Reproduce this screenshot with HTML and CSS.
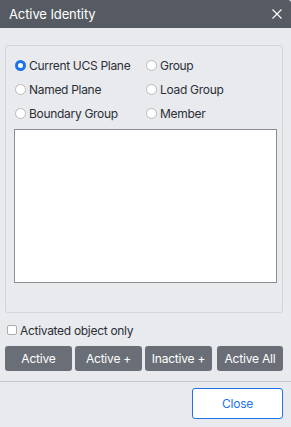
FILE: index.html
```html
<!DOCTYPE html>
<html lang="en">
<head>
<meta charset="utf-8">
<title>Active Identity</title>
<link rel="stylesheet" href="styles.css">
</head>
<body>
<div class="dialog">
  <div class="titlebar">
    <span class="title">Active Identity</span>
    <svg class="close-x" width="10" height="10" viewBox="0 0 10 10"><path d="M0.5 0.5 L9.5 9.5 M9.5 0.5 L0.5 9.5" stroke="#ffffff" stroke-width="1.1" fill="none"/></svg>
  </div>
  <div class="main">
    <div class="group">
      <div class="radios">
        <label class="opt"><input type="radio" name="t" checked><span>Current UCS Plane</span></label>
        <label class="opt"><input type="radio" name="t"><span>Group</span></label>
        <label class="opt"><input type="radio" name="t"><span>Named Plane</span></label>
        <label class="opt"><input type="radio" name="t"><span>Load Group</span></label>
        <label class="opt"><input type="radio" name="t"><span>Boundary Group</span></label>
        <label class="opt"><input type="radio" name="t"><span>Member</span></label>
      </div>
      <div class="listbox"></div>
    </div>
    <label class="check"><input type="checkbox"><span>Activated object only</span></label>
    <div class="actions">
      <button class="btn">Active</button>
      <button class="btn">Active +</button>
      <button class="btn">Inactive +</button>
      <button class="btn last">Active All</button>
    </div>
  </div>
  <div class="footer">
    <button class="close-btn">Close</button>
  </div>
</div>
</body>
</html>
```
FILE: styles.css
```css
html, body {
  margin: 0;
  padding: 0;
  background: #e9eaee;
}
body {
  font-family: Inter, "Noto Sans", sans-serif;
  font-size: 12px;
  letter-spacing: -0.3px;
  color: #2b2f36;
}
.dialog {
  width: 291px;
  height: 427px;
  background: #e9eaee;
  box-sizing: border-box;
  border-top-right-radius: 3px;
  overflow: hidden;
}
.titlebar {
  height: 28px;
  background: #565b63;
  display: flex;
  align-items: center;
  justify-content: space-between;
  padding: 0 9px 0 9px;
}
.title {
  color: #ffffff;
  font-size: 13px;
  letter-spacing: -0.1px;
  margin-top: -1px;
}
.close-x {
  display: block;
  margin-top: -1px;
}
.main {
  padding: 17px 8px 0 5px;
}
.group {
  height: 268px;
  box-sizing: border-box;
  border: 1px solid #d3d5d9;
  border-radius: 3px;
  padding: 7px 0 0 0;
}
.radios {
  display: grid;
  grid-template-columns: 131px 1fr;
  grid-auto-rows: 24px;
  padding-left: 9px;
}
.opt {
  display: flex;
  align-items: center;
  gap: 3px;
  white-space: nowrap;
}
.opt input {
  appearance: none;
  -webkit-appearance: none;
  margin: 0;
  width: 11px;
  height: 11px;
  box-sizing: border-box;
  border: 1px solid #b6b9be;
  border-radius: 50%;
  background: #ffffff;
}
.opt input:checked {
  border: 3.5px solid #1a73e8;
}
.listbox {
  margin: 4px 0 0 8px;
  width: 263px;
  height: 154px;
  box-sizing: border-box;
  background: #ffffff;
  border: 1px solid #8a8d92;
}
.check {
  display: flex;
  align-items: center;
  gap: 3px;
  height: 18px;
  margin-top: 8px;
  margin-left: 2px;
}
.check input {
  appearance: none;
  -webkit-appearance: none;
  margin: 0;
  width: 10px;
  height: 10px;
  box-sizing: border-box;
  border: 1px solid #a9acb1;
  border-radius: 2px;
  background: #ffffff;
}
.actions {
  display: grid;
  grid-template-columns: 67px 67px 67px 68px;
  column-gap: 3px;
  margin-top: 7px;
}
.btn {
  height: 25px;
  border: none;
  border-radius: 3px;
  background: #6a6f77;
  color: #ffffff;
  font-family: Inter, "Noto Sans", sans-serif;
  font-size: 12px;
  letter-spacing: -0.2px;
  padding: 0;
}
.btn.last {
  margin-left: 2px;
}
.footer {
  margin-top: 10px;
  border-top: 1px solid #c6c8cc;
  padding: 6px 8px 0 0;
  display: flex;
  justify-content: flex-end;
}
.close-btn {
  width: 91px;
  height: 31px;
  box-sizing: border-box;
  background: #ffffff;
  border: 1px solid #1a73e8;
  border-radius: 3px;
  color: #1a73e8;
  font-family: Inter, "Noto Sans", sans-serif;
  font-size: 12px;
  letter-spacing: -0.2px;
  padding: 0;
}
```
